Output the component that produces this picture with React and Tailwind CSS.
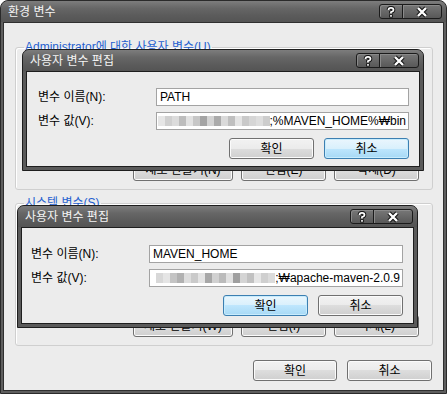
import React from "react";

const font = "font-['Liberation_Sans','Noto_Sans_CJK_KR',sans-serif]";

// pixelated (masked) part of the path values
const blurA = [
    "bg-[#e6e6e6]", "bg-[#d0d0d0]", "bg-[#dcdcdc]", "bg-[#bdbdbd]", "bg-[#e2e2e2]", "bg-[#c7c7c7]",
    "bg-[#a4a4a4]", "bg-[#d3d3d3]", "bg-[#ababab]", "bg-[#dadada]", "bg-[#bfbfbf]", "bg-[#e4e4e4]",
    "bg-[#c9c9c9]", "bg-[#d6d6d6]", "bg-[#dedede]", "bg-[#cdcdcd]",
];
const blurB = [
    "bg-[#d8d8d8]", "bg-[#e5e5e5]", "bg-[#c4c4c4]", "bg-[#b1b1b1]", "bg-[#dddddd]", "bg-[#cacaca]",
    "bg-[#e3e3e3]", "bg-[#a7a7a7]", "bg-[#d1d1d1]", "bg-[#bbbbbb]", "bg-[#e0e0e0]", "bg-[#9f9f9f]",
    "bg-[#d4d4d4]", "bg-[#c1c1c1]", "bg-[#e6e6e6]", "bg-[#cfcfcf]", "bg-[#dbdbdb]",
];

function QuestionIcon() {
    return (
        <svg width="12" height="12" viewBox="0 0 12 12">
            <path d="M3.5 4 Q3.5 1.8 6 1.8 Q8.5 1.8 8.5 4 Q8.5 5.4 6 6.2 V7.4" fill="none" stroke="#111" strokeWidth="3.6" />
            <rect x="4.2" y="8.3" width="3.6" height="3.2" fill="#111" />
            <path d="M3.5 4 Q3.5 1.8 6 1.8 Q8.5 1.8 8.5 4 Q8.5 5.4 6 6.2 V7.4" fill="none" stroke="#fff" strokeWidth="1.8" />
            <rect x="5.1" y="9.1" width="1.8" height="1.6" fill="#fff" />
        </svg>
    );
}

function CloseIcon() {
    return (
        <svg width="14" height="12" viewBox="0 0 14 12">
            <path d="M3 2 L11 10 M11 2 L3 10" stroke="#111" strokeWidth="4.4" />
            <path d="M3 2 L11 10 M11 2 L3 10" stroke="#fff" strokeWidth="2.4" />
        </svg>
    );
}

function CaptionButtons() {
    return (
        <div className="flex h-[15px]">
            <div className="flex w-[24px] items-center justify-center rounded-l-[3px] border border-[#1b1b1b] bg-[linear-gradient(to_bottom,#777,#585858)] shadow-[inset_1px_1px_0_#8a8a8a]">
                <QuestionIcon />
            </div>
            <div className="-ml-px flex w-[40px] items-center justify-center rounded-r-[3px] border border-[#1b1b1b] bg-[linear-gradient(to_bottom,#777,#585858)] shadow-[inset_1px_1px_0_#8a8a8a]">
                <CloseIcon />
            </div>
        </div>
    );
}

function TitleBar({ title }) {
    return (
        <div className="flex h-[21px] shrink-0 items-center justify-between rounded-t-[6px] bg-[linear-gradient(to_bottom,#7d7d7d,#666_35%,#5b5b5b_70%,#545454)] pl-[7px] pr-[4px]">
            <span className="text-[12px] leading-[14px] text-[#f4f4f4]">{title}</span>
            <CaptionButtons />
        </div>
    );
}

function Btn({ children, focus, className = "" }) {
    return (
        <button
            className={`flex items-center justify-center rounded-[3px] border text-[12px] leading-[14px] text-black ${
                focus
                    ? "border-[#3c7fb1] bg-[linear-gradient(to_bottom,#eaf6fd_0%,#d9f0fc_50%,#bee6fd_50%,#a7d9f5_100%)] shadow-[inset_0_0_0_1px_#c8ecfd]"
                    : "border-[#707070] bg-[linear-gradient(to_bottom,#f2f2f2_0%,#ebebeb_50%,#dddddd_50%,#cfcfcf_100%)] shadow-[inset_0_0_0_1px_#fbfbfb]"
            } ${className}`}
        >
            {children}
        </button>
    );
}

function EditDialog({ className, bodyClass, name, value, blur, focus }) {
    return (
        <div className={`absolute flex flex-col rounded-t-[7px] border border-[#1e1e1e] bg-[#5a5a5a] ${className}`}>
            <TitleBar title="사용자 변수 편집" />
            <div className={`mx-[3px] mb-[3px] border border-[#1e1e1e] bg-[#ececec] pb-[7px] pr-[10px] ${bodyClass}`}>
                <div className="grid grid-cols-[118px_1fr] items-center gap-y-[6px] text-[12px] leading-[14px] text-black">
                    <span>변수 이름(N):</span>
                    <div className="flex h-[18px] items-center border border-[#a3a3a3] bg-white px-[3px]">{name}</div>
                    <span>변수 값(V):</span>
                    <div className="flex h-[18px] items-center justify-end overflow-hidden border border-[#a3a3a3] bg-white px-[2px]">
                        <div className="flex shrink-0">
                            {blur.map((c, i) => (
                                <div key={i} className={`h-[10px] w-[7px] ${c}`} />
                            ))}
                        </div>
                        <span className="shrink-0 whitespace-nowrap">{value}</span>
                    </div>
                </div>
                <div className="mt-[8px] flex justify-end gap-[10px]">
                    <Btn focus={focus === "ok"} className="h-[21px] w-[85px]">확인</Btn>
                    <Btn focus={focus === "cancel"} className="h-[21px] w-[85px]">취소</Btn>
                </div>
            </div>
        </div>
    );
}

// group box with the (covered) variable list and its buttons
function VarGroup({ label, buttons, className = "" }) {
    return (
        <fieldset className={`rounded-[3px] border border-[#cfcfcf] shadow-[inset_1px_1px_0_#fff] ${className}`}>
            <legend className="ml-[8px] px-[1px] text-[12px] leading-[14px] text-[#1f5fcf]">{label}</legend>
            <div className="flex h-[135px] flex-col pb-[8px] pl-[8px] pr-[13px] pt-[4px]">
                <div className="mr-[4px] flex-1 border border-[#a3a3a3] bg-white">
                    <div className="h-[17px] border-b border-[#d5d5d5] bg-[#f5f5f5]" />
                </div>
                <div className="mt-[8px] flex justify-end gap-[8px]">
                    <Btn className="h-[22px] w-[100px]">{buttons[0]}</Btn>
                    <Btn className="h-[22px] w-[85px]">{buttons[1]}</Btn>
                    <Btn className="h-[22px] w-[85px]">{buttons[2]}</Btn>
                </div>
            </div>
        </fieldset>
    );
}

export default function App() {
    return (
        <div className={`relative flex h-[394px] w-[447px] flex-col overflow-hidden rounded-t-[8px] border border-[#2a2a2a] bg-[#5e5e5e] ${font}`}>
            <TitleBar title="환경 변수" />
            <div className="mx-[2px] mb-[2px] flex flex-1 flex-col border border-[#2f2f2f] bg-[#ececec] pl-[11px] pr-[10px] pt-[17px]">
                <VarGroup
                    label="Administrator에 대한 사용자 변수(U)"
                    buttons={["새로 만들기(N)", "편집(E)", "삭제(D)"]}
                />
                <VarGroup
                    className="mt-[6px]"
                    label="시스템 변수(S)"
                    buttons={["새로 만들기(W)", "편집(I)", "삭제(L)"]}
                />
                <div className="mt-[14px] flex justify-end gap-[10px] pr-[1px]">
                    <Btn className="h-[21px] w-[84px]">확인</Btn>
                    <Btn className="h-[21px] w-[85px]">취소</Btn>
                </div>
            </div>

            <EditDialog
                className="left-[21px] top-[48px] w-[402px]"
                bodyClass="pl-[11px] pt-[16px]"
                name="PATH"
                value=";%MAVEN_HOME%₩bin"
                blur={blurA}
                focus="cancel"
            />
            <EditDialog
                className="left-[16px] top-[204px] w-[401px]"
                bodyClass="pl-[9px] pt-[17px]"
                name="MAVEN_HOME"
                value=";₩apache-maven-2.0.9"
                blur={blurB}
                focus="ok"
            />
        </div>
    );
}
